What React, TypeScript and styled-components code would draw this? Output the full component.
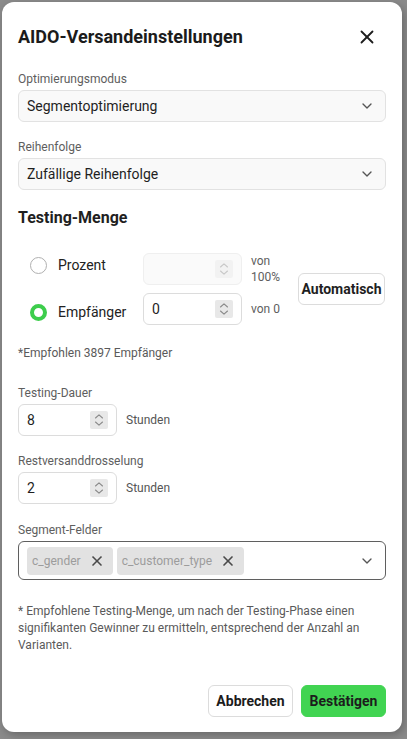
import React from "react";
import styled, { createGlobalStyle } from "styled-components";
import { ChevronDown, X } from "lucide-react";

const GlobalStyle = createGlobalStyle`
  html, body { margin: 0; padding: 0; }
  body {
    background: #8b8b8b;
    font-family: Roboto, "Liberation Sans", sans-serif;
    -webkit-font-smoothing: antialiased;
  }
  * { box-sizing: border-box; }
`;

const Backdrop = styled.div`
  height: 739px;
  padding: 2px 5px 0 2px;
  background: #8b8b8b;
`;

const Modal = styled.div`
  width: 400px;
  height: 730px;
  background: #fff;
  border-radius: 12px;
  padding: 24px 16px 15px;
  display: flex;
  flex-direction: column;
  box-shadow: 2px 3px 8px rgba(0, 0, 0, 0.25);
`;

const Header = styled.div`
  display: flex;
  align-items: center;
  justify-content: space-between;
  height: 22px;
`;

const Title = styled.h2`
  margin: 0;
  font-size: 18px;
  line-height: 22px;
  font-weight: 700;
  color: #1b1b1b;
`;

const CloseButton = styled.button`
  width: 22px;
  height: 22px;
  padding: 0;
  margin-right: 8px;
  border: none;
  background: transparent;
  display: flex;
  align-items: center;
  justify-content: center;
  color: #1d1d1d;
`;

const Field = styled.div<{ $mt: number }>`
  display: flex;
  flex-direction: column;
  gap: 3px;
  margin-top: ${(p) => p.$mt}px;
`;

const Label = styled.div`
  font-size: 12px;
  line-height: 16px;
  color: #5e5e5e;
`;

const Select = styled.div`
  height: 32px;
  border: 1px solid #e2e2e2;
  border-radius: 6px;
  background: #f9f9f9;
  padding: 0 10px 0 8px;
  display: flex;
  align-items: center;
  justify-content: space-between;
  font-size: 14px;
  color: #1f1f1f;
`;

const SectionTitle = styled.h3`
  margin: 18px 0 0;
  font-size: 16px;
  line-height: 20px;
  font-weight: 700;
  color: #1f1f1f;
`;

const TestingRow = styled.div`
  display: flex;
  align-items: center;
  margin-top: 25px;
`;

const RadioGroup = styled.div`
  width: 125px;
  align-self: flex-start;
  display: flex;
  flex-direction: column;
  gap: 27px;
  padding: 2px 0 0 12px;
`;

const RadioItem = styled.label`
  display: flex;
  align-items: center;
  gap: 11px;
  height: 20px;
  font-size: 14px;
  color: #222;
`;

const RadioCircle = styled.span<{ $checked?: boolean }>`
  width: 17px;
  height: 17px;
  border-radius: 50%;
  border: ${(p) => (p.$checked ? "4px solid #3dcd4c" : "1.5px solid #b0b0b0")};
  background: #fff;
  flex-shrink: 0;
`;

const InputColumn = styled.div`
  display: flex;
  flex-direction: column;
  gap: 8px;
`;

const InputRow = styled.div`
  display: flex;
  align-items: center;
  gap: 9px;
`;

const NumberBox = styled.div<{ $disabled?: boolean }>`
  width: 99px;
  height: 32px;
  border: 1px solid ${(p) => (p.$disabled ? "#efefef" : "#dcdcdc")};
  background: ${(p) => (p.$disabled ? "#fafafa" : "#fff")};
  border-radius: 6px;
  padding: 0 8px 0 8px;
  display: flex;
  align-items: center;
  justify-content: space-between;
  font-size: 14px;
  color: #1f1f1f;
`;

const Spinner = styled.span<{ $disabled?: boolean }>`
  width: 18px;
  height: 18px;
  border-radius: 2px;
  background: ${(p) => (p.$disabled ? "#f2f2f2" : "#e8e8e8")};
  display: flex;
  align-items: center;
  justify-content: center;
  color: ${(p) => (p.$disabled ? "#c8c8c8" : "#8a8a8a")};
`;

const VonText = styled.div`
  width: 38px;
  font-size: 12px;
  line-height: 16px;
  color: #5e5e5e;
`;

const AutoButton = styled.button`
  margin-left: 9px;
  width: 87px;
  height: 32px;
  border: 1px solid #dcdcdc;
  border-radius: 6px;
  background: #fff;
  font-family: inherit;
  font-size: 14px;
  font-weight: 700;
  color: #1f1f1f;
  padding: 0;
`;

const Note = styled.div<{ $mt: number }>`
  margin-top: ${(p) => p.$mt}px;
  font-size: 12px;
  line-height: 17px;
  color: #5a5a5a;
`;

const UnitRow = styled.div`
  display: flex;
  align-items: center;
  gap: 9px;
`;

const UnitText = styled.span`
  font-size: 12px;
  color: #555;
`;

const MultiSelect = styled.div`
  height: 39px;
  border: 1px solid #5f5f5f;
  border-radius: 6px;
  padding: 0 10px 0 8px;
  display: flex;
  align-items: center;
  gap: 4px;
  color: #444;
`;

const Chip = styled.span`
  height: 28px;
  border-radius: 4px;
  background: #e2e2e2;
  padding: 0 8px 0 5px;
  display: flex;
  align-items: center;
  gap: 8px;
  font-size: 12px;
  color: #9c9c9c;
`;

const ChipClose = styled.span`
  display: flex;
  color: #4a4a4a;
`;

const Spacer = styled.span`
  flex: 1;
`;

const Footer = styled.div`
  margin-top: auto;
  display: flex;
  justify-content: flex-end;
  gap: 8px;
`;

const FooterButton = styled.button<{ $primary?: boolean }>`
  height: 32px;
  width: 85px;
  padding: 0;
  border-radius: 6px;
  border: 1px solid ${(p) => (p.$primary ? "#41d452" : "#dcdcdc")};
  background: ${(p) => (p.$primary ? "#41d452" : "#fff")};
  font-family: inherit;
  font-size: 14px;
  font-weight: 700;
  color: #1c1c1c;
`;

const SpinIcon = () => (
  <svg width="10" height="14" viewBox="0 0 10 14" fill="none" stroke="currentColor" strokeWidth="1.1" strokeLinecap="round" strokeLinejoin="round">
    <path d="M1.5 5 5 1.8 8.5 5" />
    <path d="M1.5 9 5 12.2 8.5 9" />
  </svg>
);

const NumberInput = ({ value, disabled }: { value?: string; disabled?: boolean }) => (
  <NumberBox $disabled={disabled}>
    <span>{value ?? ""}</span>
    <Spinner $disabled={disabled}>
      <SpinIcon />
    </Spinner>
  </NumberBox>
);

export default function App() {
  return (
    <>
      <GlobalStyle />
      <Backdrop>
        <Modal>
          <Header>
            <Title>AIDO-Versandeinstellungen</Title>
            <CloseButton aria-label="Schließen">
              <X size={22} strokeWidth={2} />
            </CloseButton>
          </Header>

          <Field $mt={23}>
            <Label>Optimierungsmodus</Label>
            <Select>
              <span>Segmentoptimierung</span>
              <ChevronDown size={16} strokeWidth={2} color="#555" />
            </Select>
          </Field>

          <Field $mt={17}>
            <Label>Reihenfolge</Label>
            <Select>
              <span>Zufällige Reihenfolge</span>
              <ChevronDown size={16} strokeWidth={2} color="#555" />
            </Select>
          </Field>

          <SectionTitle>Testing-Menge</SectionTitle>

          <TestingRow>
            <RadioGroup>
              <RadioItem>
                <RadioCircle />
                Prozent
              </RadioItem>
              <RadioItem>
                <RadioCircle $checked />
                Empfänger
              </RadioItem>
            </RadioGroup>
            <InputColumn>
              <InputRow>
                <NumberInput disabled />
                <VonText>von 100%</VonText>
              </InputRow>
              <InputRow>
                <NumberInput value="0" />
                <VonText>von 0</VonText>
              </InputRow>
            </InputColumn>
            <AutoButton>Automatisch</AutoButton>
          </TestingRow>

          <Note $mt={20}>*Empfohlen 3897 Empfänger</Note>

          <Field $mt={23}>
            <Label>Testing-Dauer</Label>
            <UnitRow>
              <NumberInput value="8" />
              <UnitText>Stunden</UnitText>
            </UnitRow>
          </Field>

          <Field $mt={17}>
            <Label>Restversanddrosselung</Label>
            <UnitRow>
              <NumberInput value="2" />
              <UnitText>Stunden</UnitText>
            </UnitRow>
          </Field>

          <Field $mt={18}>
            <Label>Segment-Felder</Label>
            <MultiSelect>
              <Chip>
                c_gender
                <ChipClose>
                  <X size={16} strokeWidth={2.5} />
                </ChipClose>
              </Chip>
              <Chip>
                c_customer_type
                <ChipClose>
                  <X size={16} strokeWidth={2.5} />
                </ChipClose>
              </Chip>
              <Spacer />
              <ChevronDown size={16} strokeWidth={2} color="#555" />
            </MultiSelect>
          </Field>

          <Note $mt={23}>
            * Empfohlene Testing-Menge, um nach der Testing-Phase einen signifikanten Gewinner zu ermitteln,
            entsprechend der Anzahl an Varianten.
          </Note>

          <Footer>
            <FooterButton>Abbrechen</FooterButton>
            <FooterButton $primary>Bestätigen</FooterButton>
          </Footer>
        </Modal>
      </Backdrop>
    </>
  );
}
